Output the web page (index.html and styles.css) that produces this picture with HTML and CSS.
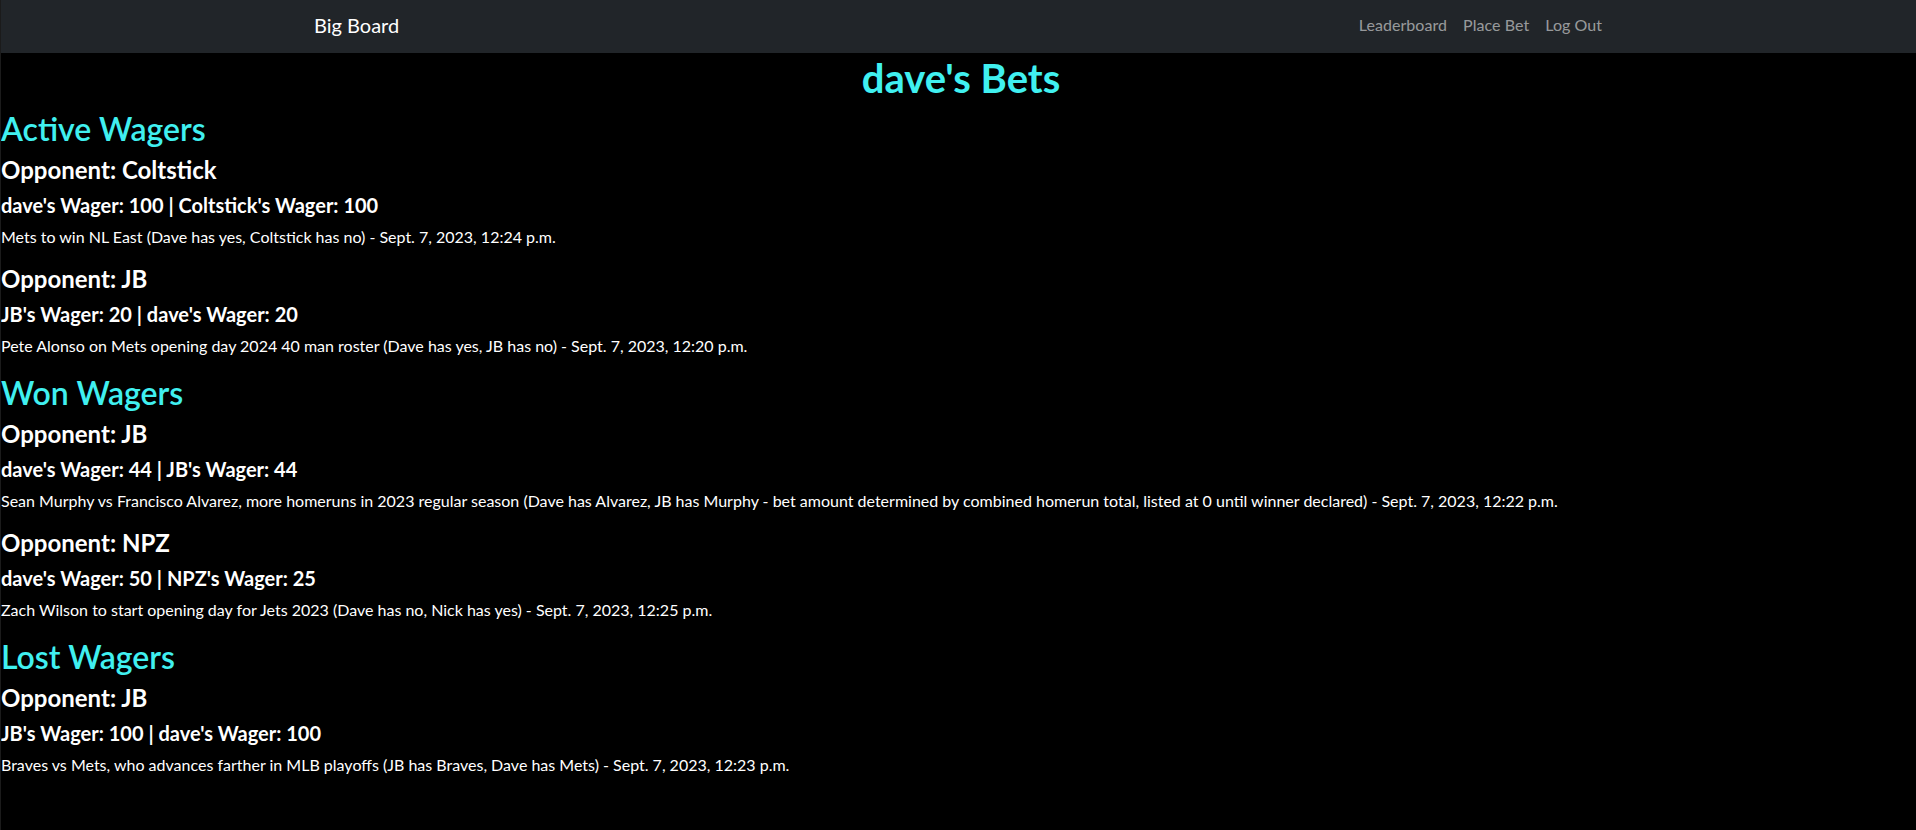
FILE: index.html
```html
<!DOCTYPE html>
<html lang="en">
<head>
<meta charset="utf-8">
<title>Big Board</title>
<link rel="stylesheet" href="styles.css">
</head>
<body>
<nav class="navbar">
  <div class="nav-inner">
    <a class="brand" href="#">Big Board</a>
    <ul class="nav-links">
      <li><a href="#">Leaderboard</a></li>
      <li><a href="#">Place Bet</a></li>
      <li><a href="#">Log Out</a></li>
    </ul>
  </div>
</nav>
<main class="content">
  <h1 class="page-title">dave's Bets</h1>

  <section class="group">
    <h2 class="group-title">Active Wagers</h2>
    <div class="wager">
      <h4 class="opponent">Opponent: Coltstick</h4>
      <h5 class="amounts">dave's Wager: 100 | Coltstick's Wager: 100</h5>
      <p class="desc">Mets to win NL East (Dave has yes, Coltstick has no) - Sept. 7, 2023, 12:24 p.m.</p>
    </div>
    <div class="wager">
      <h4 class="opponent">Opponent: JB</h4>
      <h5 class="amounts">JB's Wager: 20 | dave's Wager: 20</h5>
      <p class="desc">Pete Alonso on Mets opening day 2024 40 man roster (Dave has yes, JB has no) - Sept. 7, 2023, 12:20 p.m.</p>
    </div>
  </section>

  <section class="group">
    <h2 class="group-title">Won Wagers</h2>
    <div class="wager">
      <h4 class="opponent">Opponent: JB</h4>
      <h5 class="amounts">dave's Wager: 44 | JB's Wager: 44</h5>
      <p class="desc">Sean Murphy vs Francisco Alvarez, more homeruns in 2023 regular season (Dave has Alvarez, JB has Murphy - bet amount determined by combined homerun total, listed at 0 until winner declared) - Sept. 7, 2023, 12:22 p.m.</p>
    </div>
    <div class="wager">
      <h4 class="opponent">Opponent: NPZ</h4>
      <h5 class="amounts">dave's Wager: 50 | NPZ's Wager: 25</h5>
      <p class="desc">Zach Wilson to start opening day for Jets 2023 (Dave has no, Nick has yes) - Sept. 7, 2023, 12:25 p.m.</p>
    </div>
  </section>

  <section class="group">
    <h2 class="group-title">Lost Wagers</h2>
    <div class="wager">
      <h4 class="opponent">Opponent: JB</h4>
      <h5 class="amounts">JB's Wager: 100 | dave's Wager: 100</h5>
      <p class="desc">Braves vs Mets, who advances farther in MLB playoffs (JB has Braves, Dave has Mets) - Sept. 7, 2023, 12:23 p.m.</p>
    </div>
  </section>
</main>
</body>
</html>
```
FILE: styles.css
```css
html, body {
  margin: 0;
  padding: 0;
}
body {
  background: #000;
  color: #fff;
  font-family: "Segoe UI", Lato, "Noto Sans", sans-serif;
  font-size: 16px;
  line-height: 24px;
  border-left: 1px solid #1b1b1b;
  min-height: 830px;
  box-sizing: border-box;
}
a { text-decoration: none; }

.navbar {
  background: #212529;
  height: 53px;
  padding-bottom: 4px;
  box-sizing: border-box;
  display: flex;
  align-items: center;
}
.nav-inner {
  width: 1320px;
  margin-left: 301px;
  padding: 0 12px;
  box-sizing: border-box;
  display: flex;
  justify-content: space-between;
  align-items: center;
}
.brand {
  color: #fff;
  font-size: 20px;
  line-height: 30px;
}
.nav-links {
  list-style: none;
  margin: 0;
  padding: 0;
  display: flex;
}
.nav-links a {
  display: block;
  padding: 8px;
  color: rgba(255, 255, 255, 0.55);
  font-size: 16px;
  line-height: 24px;
  letter-spacing: 0.05px;
}

.content {
  display: flex;
  flex-direction: column;
}
h1, h2, h4, h5, p { margin: 0; }

.page-title {
  font-size: 40px;
  line-height: 48px;
  font-weight: 700;
  color: #40f0f0;
  text-align: center;
  padding-left: 5px;
  margin-bottom: 8px;
  padding-top: 1px;
}
.group-title {
  font-size: 32px;
  line-height: 38.4px;
  font-weight: 600;
  color: #40f0f0;
  margin-bottom: 8px;
}
.opponent {
  font-size: 24px;
  line-height: 28.8px;
  font-weight: 700;
  margin-bottom: 8px;
}
.amounts {
  font-size: 20px;
  line-height: 24px;
  font-weight: 700;
  margin-bottom: 8px;
}
.desc {
  font-size: 16px;
  line-height: 24px;
  margin-bottom: 16px;
}
```
